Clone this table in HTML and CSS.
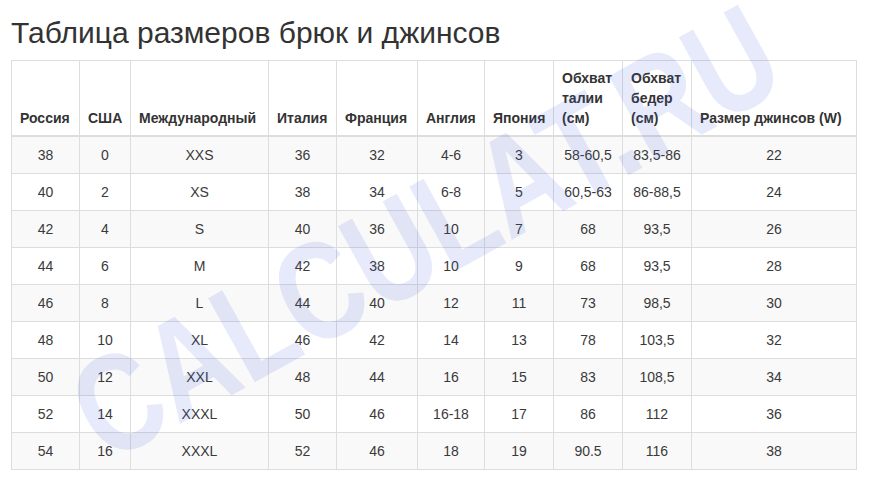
FILE: index.html
```html
<!DOCTYPE html>
<html lang="ru">
<head>
<meta charset="utf-8">
<title>Таблица размеров брюк и джинсов</title>
<link rel="stylesheet" href="styles.css">
</head>
<body>
<main class="page">
  <h1 class="title">Таблица размеров брюк и джинсов</h1>
  <table class="sizes">
    <colgroup>
      <col class="c1"><col class="c2"><col class="c3"><col class="c4"><col class="c5">
      <col class="c6"><col class="c7"><col class="c8"><col class="c9"><col class="c10">
    </colgroup>
    <thead>
      <tr>
        <th>Россия</th><th>США</th><th>Международный</th><th>Италия</th><th>Франция</th>
        <th>Англия</th><th>Япония</th><th>Обхват талии (см)</th><th>Обхват бедер (см)</th><th>Размер джинсов (W)</th>
      </tr>
    </thead>
    <tbody>
      <tr><td>38</td><td>0</td><td>XXS</td><td>36</td><td>32</td><td>4-6</td><td>3</td><td>58-60,5</td><td>83,5-86</td><td>22</td></tr>
      <tr><td>40</td><td>2</td><td>XS</td><td>38</td><td>34</td><td>6-8</td><td>5</td><td>60,5-63</td><td>86-88,5</td><td>24</td></tr>
      <tr><td>42</td><td>4</td><td>S</td><td>40</td><td>36</td><td>10</td><td>7</td><td>68</td><td>93,5</td><td>26</td></tr>
      <tr><td>44</td><td>6</td><td>M</td><td>42</td><td>38</td><td>10</td><td>9</td><td>68</td><td>93,5</td><td>28</td></tr>
      <tr><td>46</td><td>8</td><td>L</td><td>44</td><td>40</td><td>12</td><td>11</td><td>73</td><td>98,5</td><td>30</td></tr>
      <tr><td>48</td><td>10</td><td>XL</td><td>46</td><td>42</td><td>14</td><td>13</td><td>78</td><td>103,5</td><td>32</td></tr>
      <tr><td>50</td><td>12</td><td>XXL</td><td>48</td><td>44</td><td>16</td><td>15</td><td>83</td><td>108,5</td><td>34</td></tr>
      <tr><td>52</td><td>14</td><td>XXXL</td><td>50</td><td>46</td><td>16-18</td><td>17</td><td>86</td><td>112</td><td>36</td></tr>
      <tr><td>54</td><td>16</td><td>XXXL</td><td>52</td><td>46</td><td>18</td><td>19</td><td>90.5</td><td>116</td><td>38</td></tr>
    </tbody>
  </table>
</main>
<div class="watermark-layer" aria-hidden="true"><span class="watermark">CALCULAT.RU</span></div>
</body>
</html>
```
FILE: styles.css
```css
html, body {
  margin: 0;
  padding: 0;
  background: #fff;
}
body {
  font-family: "Liberation Sans", Arial, Helvetica, sans-serif;
  font-size: 14px;
  line-height: 20px;
  color: #333;
}
.page {
  padding: 16px 13px 0 11px;
}
.title {
  margin: 0 0 10px 0;
  font-size: 30px;
  line-height: 34px;
  font-weight: normal;
  color: #333;
}
.sizes {
  border-collapse: collapse;
  table-layout: fixed;
  width: 845px;
  border: 1px solid #ddd;
}
.sizes th,
.sizes td {
  border: 1px solid #ddd;
  padding: 8px;
}
.sizes th {
  padding: 7px 8px;
  text-align: left;
  vertical-align: bottom;
  font-weight: bold;
  border-bottom-width: 2px;
}
.sizes td {
  text-align: center;
  color: #3a3a3a;
}
.sizes tbody tr:nth-child(odd) {
  background: #f9f9f9;
}
.c1 { width: 68px; }
.c2 { width: 51px; }
.c3 { width: 138px; }
.c4 { width: 68px; }
.c5 { width: 81px; }
.c6 { width: 67px; }
.c7 { width: 69px; }
.c8 { width: 69px; }
.c9 { width: 69px; }
.c10 { width: 165px; }
.watermark-layer {
  position: fixed;
  left: 0;
  top: 0;
  right: 0;
  bottom: 0;
  overflow: hidden;
  pointer-events: none;
}
.watermark {
  position: absolute;
  left: 181px;
  top: 198px;
  display: inline-block;
  font-family: "Liberation Sans", Arial, sans-serif;
  font-weight: bold;
  font-size: 70px;
  line-height: 70px;
  color: rgba(60, 90, 225, 0.13);
  white-space: nowrap;
  transform: rotate(-29deg) scale(1.6, 2);
  transform-origin: 50% 50%;
}
```
